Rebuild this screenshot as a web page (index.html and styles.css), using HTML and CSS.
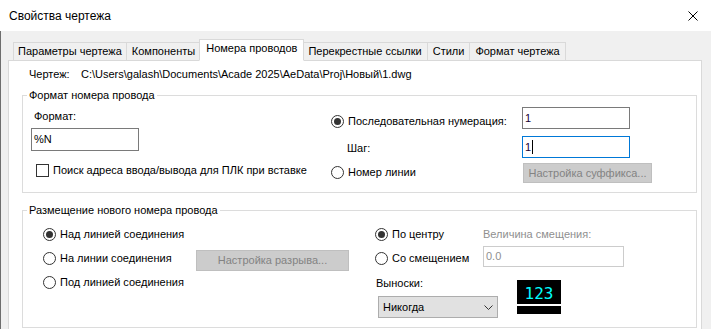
FILE: index.html
```html
<!DOCTYPE html>
<html lang="ru">
<head>
  <meta charset="UTF-8">
  <title>Свойства чертежа</title>
  <link rel="stylesheet" href="styles.css">
</head>
<body>
  <div class="titlebar">
    <span>Свойства чертежа</span>
    <svg class="close" width="10" height="10" viewBox="0 0 10 10">
      <path d="M0.5 0.5 L9.5 9.5 M9.5 0.5 L0.5 9.5" stroke="#000" stroke-width="1" fill="none"/>
    </svg>
  </div>

  <div class="dialog-body">
    <div class="tabs">
      <div class="tab">Параметры чертежа</div>
      <div class="tab">Компоненты</div>
      <div class="tab active">Номера проводов</div>
      <div class="tab">Перекрестные ссылки</div>
      <div class="tab">Стили</div>
      <div class="tab">Формат чертежа</div>
    </div>

    <div class="panel">
      <div class="file-row">
        <span class="file-label">Чертеж:</span>
        <span>C:\Users\galash\Documents\Acade 2025\AeData\Proj\Новый\1.dwg</span>
      </div>

      <fieldset class="group">
        <legend>Формат номера провода</legend>
        <div class="format-body">
          <div class="format-left">
            <div class="field-label">Формат:</div>
            <div class="textbox format-input">%N</div>
            <label class="check-row">
              <span class="checkbox"></span>
              <span>Поиск адреса ввода/вывода для ПЛК при вставке</span>
            </label>
          </div>
          <div class="format-right">
            <div class="radio-row seq-row"><span class="radio checked"></span>Последовательная нумерация:</div>
            <div class="textbox num-input">1</div>
            <div class="step-label">Шаг:</div>
            <div class="textbox num-input focused">1<span class="caret"></span></div>
            <div class="radio-row line-row"><span class="radio"></span>Номер линии</div>
            <div class="btn-disabled suffix-btn">Настройка суффикса...</div>
          </div>
        </div>
      </fieldset>

      <fieldset class="group place-group">
        <legend>Размещение нового номера провода</legend>
        <div class="place-body">
          <div class="radio-row"><span class="radio checked"></span>Над линией соединения</div>
          <div></div>
          <div class="radio-row"><span class="radio checked"></span>По центру</div>
          <div class="muted">Величина смещения:</div>

          <div class="radio-row"><span class="radio"></span>На линии соединения</div>
          <div class="btn-disabled break-btn">Настройка разрыва...</div>
          <div class="radio-row"><span class="radio"></span>Со смещением</div>
          <div class="textbox offset-input">0.0</div>

          <div class="radio-row"><span class="radio"></span>Под линией соединения</div>
          <div></div>
          <div class="leader-block">
            <div class="leader">
              <div class="leader-label">Выноски:</div>
              <div class="select">
                <span>Никогда</span>
                <svg width="9" height="5" viewBox="0 0 9 5">
                  <path d="M0.5 0.5 L4.5 4.5 L8.5 0.5" stroke="#333" stroke-width="1" fill="none"/>
                </svg>
              </div>
            </div>
            <div class="preview">
              <div class="preview-top">123</div>
              <div class="preview-line"></div>
              <div class="preview-bottom"></div>
            </div>
          </div>
        </div>
      </fieldset>
    </div>
  </div>
</body>
</html>
```

FILE: styles.css
```css
body {
  margin: 0;
  width: 711px;
  height: 329px;
  overflow: hidden;
  font-family: 'Liberation Sans', Arial, sans-serif;
  font-size: 11px;
  color: #000;
  background: #f0f0f0;
}

.titlebar {
  height: 31px;
  background: #fff;
  display: flex;
  align-items: center;
  justify-content: space-between;
  padding: 0 13px 0 9px;
  font-size: 12px;
}

.dialog-body {
  height: 298px;
  padding: 8px 9px 0 7px;
  border-left: 1px solid #6e6e6e;
}

/* tabs */
.tabs {
  display: flex;
  align-items: flex-end;
  padding-left: 5px;
  margin-bottom: -1px;
  position: relative;
  z-index: 1;
}

.tab {
  height: 17px;
  line-height: 16px;
  padding: 0 5px;
  border: 1px solid #d9d9d9;
  margin-left: -1px;
  background: #f0f0f0;
  white-space: nowrap;
}

.tab:first-child {
  margin-left: 0;
  padding: 0 4px;
}

.tab.active {
  height: 20px;
  line-height: 17px;
  padding: 0 6px;
  background: #fff;
  border-bottom-color: #fff;
  margin-right: -1px;
  margin-left: -2px;
  position: relative;
}

.panel {
  box-sizing: border-box;
  height: 271px;
  background: #fff;
  border: 1px solid #d9d9d9;
  border-bottom: 0;
  padding: 5px 4px 0 13px;
}

.file-row {
  display: flex;
  line-height: 16px;
  padding-left: 7px;
}

.file-label {
  width: 52px;
}

/* group boxes */
.group {
  margin: 5px 0 0;
  padding: 0;
  border: 1px solid #dcdcdc;
}

.group legend {
  margin-left: 4px;
  padding: 0 2px;
  line-height: 16px;
}

.place-group {
  margin-top: 9px;
}

.format-body {
  display: flex;
  padding: 4px 0 9px 8px;
}

.format-left {
  width: 300px;
}

.field-label {
  line-height: 16px;
  margin: 1px 0 0 3px;
}

.textbox {
  box-sizing: border-box;
  height: 22px;
  line-height: 20px;
  padding-left: 2px;
  border: 1px solid #7a7a7a;
  background: #fff;
  white-space: nowrap;
}

.format-input {
  width: 108px;
  height: 23px;
  margin-top: 4px;
}

.check-row {
  display: flex;
  align-items: center;
  gap: 4px;
  line-height: 16px;
  margin: 11px 0 0 5px;
}

.checkbox {
  box-sizing: border-box;
  width: 13px;
  height: 13px;
  border: 1px solid #333;
  background: #fff;
}

.format-right {
  display: grid;
  grid-template-columns: 191px auto;
  grid-template-rows: 22px 22px 20px;
  row-gap: 6px;
}

.seq-row {
  align-self: end;
}

.step-label {
  align-self: end;
  line-height: 16px;
  padding: 0 0 1px 16px;
}

.line-row {
  align-self: start;
  margin-top: 1px;
}

.num-input {
  width: 108px;
  color: #1a0033;
}

.num-input.focused {
  border-color: #0078d7;
  margin-top: 1px;
}

.caret {
  display: inline-block;
  width: 1px;
  height: 14px;
  background: #000;
  vertical-align: -3px;
  margin-left: 1px;
}

.suffix-btn {
  width: 129px;
  margin-left: 1px;
}

/* radio buttons */
.radio-row {
  display: flex;
  align-items: center;
  gap: 4px;
  line-height: 16px;
  white-space: nowrap;
}

.radio {
  box-sizing: border-box;
  width: 13px;
  height: 13px;
  border: 1px solid #333;
  border-radius: 50%;
  background: #fff;
  display: flex;
  align-items: center;
  justify-content: center;
}

.radio.checked::after {
  content: "";
  width: 7px;
  height: 7px;
  border-radius: 50%;
  background: #333;
}

.btn-disabled {
  box-sizing: border-box;
  height: 20px;
  line-height: 18px;
  text-align: center;
  white-space: nowrap;
  background: #cccccc;
  border: 1px solid #bfbfbf;
  color: #838383;
}

.muted {
  color: #8f8f8f;
  line-height: 16px;
  align-self: center;
  white-space: nowrap;
}

/* placement group */
.place-body {
  display: grid;
  grid-template-columns: 153px 179px 108px 1fr;
  grid-template-rows: repeat(4, 24px);
  padding: 4px 0 9px 20px;
}

.place-body .radio-row {
  align-self: center;
}

.break-btn {
  width: 153px;
  height: 21px;
  line-height: 19px;
  margin-top: 4px;
}

.offset-input {
  width: 141px;
  height: 21px;
  line-height: 19px;
  border-color: #cccccc;
  color: #8f8f8f;
}

.leader-block {
  grid-column: 3 / 5;
  grid-row: 3 / 5;
  display: flex;
}

.leader {
  width: 123px;
}

.leader-label {
  line-height: 16px;
  margin: 5px 0 0 1px;
}

.select {
  box-sizing: border-box;
  width: 120px;
  height: 22px;
  margin: 5px 0 0 3px;
  padding: 0 4px;
  display: flex;
  align-items: center;
  justify-content: space-between;
  background: #e1e1e1;
  border: 1px solid #adadad;
}

.preview {
  width: 44px;
  margin: 10px 0 0 19px;
}

.preview-top {
  box-sizing: border-box;
  height: 24px;
  padding-top: 4px;
  line-height: 20px;
  background: #000;
  color: #00ffff;
  font-family: 'DejaVu Sans Mono', monospace;
  font-size: 16px;
  text-align: center;
}

.preview-line {
  height: 2px;
  background: #fff;
}

.preview-bottom {
  height: 8px;
  background: #000;
}
```
